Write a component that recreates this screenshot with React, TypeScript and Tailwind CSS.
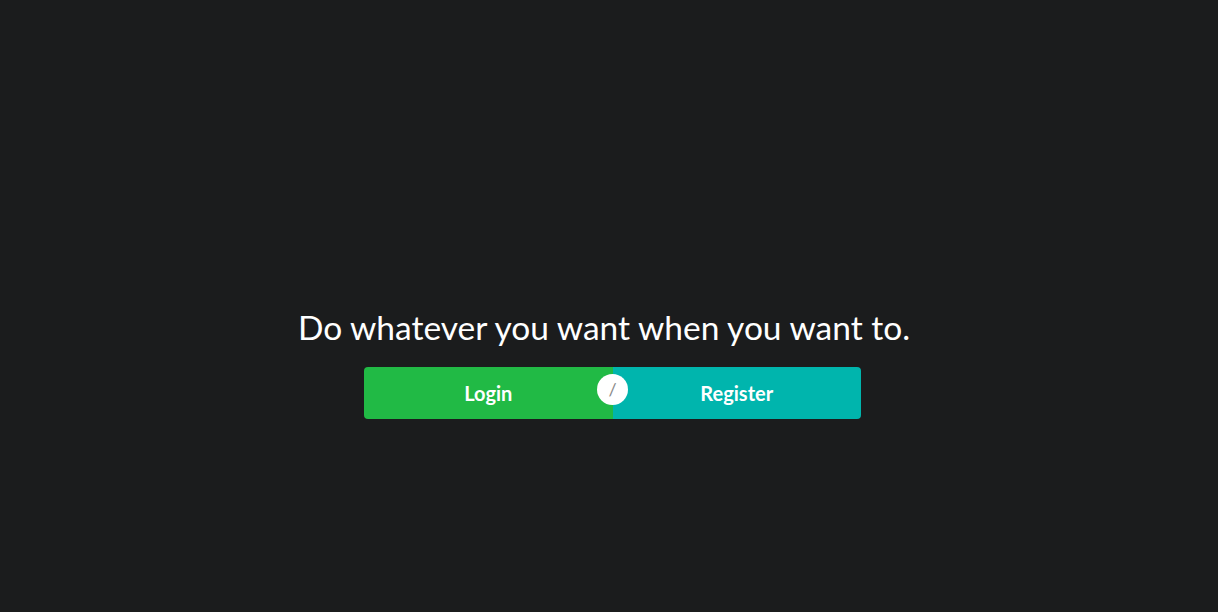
export default function App() {
  return (
    <div
      className="flex h-[612px] w-full flex-col items-center bg-[#1b1c1d] pt-[307px] text-white"
      style={{ fontFamily: "Lato, 'Open Sans', sans-serif" }}
    >
      <h1 className="mr-[10px] text-[33.5px] leading-[1.2] font-normal text-white">Do whatever you want when you want to.</h1>
      <div className="relative mt-[20px] ml-[7px] flex h-[52px] w-[497px]">
        <button className="flex flex-1 items-center justify-center rounded-l-[4px] bg-[#21ba45] text-[20px] font-bold text-white">
          Login
        </button>
        <button className="flex flex-1 items-center justify-center rounded-r-[4px] bg-[#00b5ad] text-[20px] font-bold text-white">
          Register
        </button>
        <div className="absolute top-[7px] left-[233px] flex h-[31px] w-[31px] items-center justify-center rounded-full bg-white text-[18px] text-[#8a8a8a]">
          /
        </div>
      </div>
    </div>
  );
}
